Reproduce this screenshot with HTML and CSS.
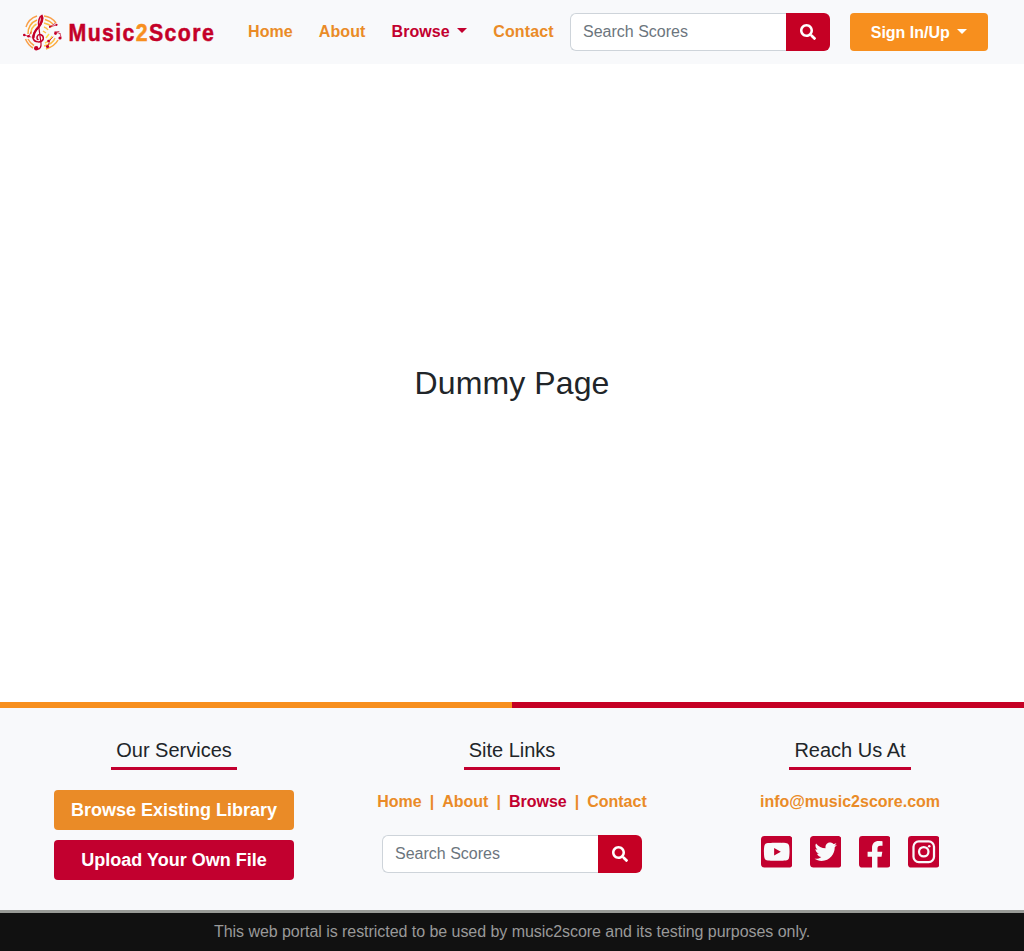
FILE: index.html
```html
<!DOCTYPE html>
<html lang="en">
<head>
<meta charset="utf-8">
<title>Music2Score</title>
<link rel="stylesheet" href="styles.css">
</head>
<body>
<svg class="defs" width="0" height="0">
  <symbol id="search" viewBox="0 0 512 512"><path d="M505 442.700L405.300 343c-4.500-4.500-10.600-7-17-7H372c27.600-35.300 44-79.700 44-128C416 93.100 322.900 0 208 0S0 93.100 0 208s93.100 208 208 208c48.300 0 92.700-16.400 128-44v16.300c0 6.400 2.500 12.500 7 17l99.700 99.700c9.400 9.400 24.600 9.400 33.900 0l28.300-28.300c9.400-9.400 9.400-24.600.1-34zM208 336c-70.700 0-128-57.200-128-128 0-70.700 57.200-128 128-128 70.700 0 128 57.200 128 128 0 70.700-57.200 128-128 128z"/></symbol>
</svg>
<header class="navbar">
  <a class="brand" aria-label="Music2Score">
    <svg width="200" height="44" viewBox="18 10 200 44">
      <g fill="none" stroke-width="1.500">
        <g stroke="#f9a04a">
          <path d="M26 27A17 17 0 0 1 37 16M44 16A17 17 0 0 1 56 23"/>
          <path d="M25.500 39Q28 45 33 48"/>
          <path d="M28 34A14 14 0 0 1 37 20M45 19.500Q50 21 53 24" stroke="#fba93c"/>
          <path d="M28 39Q30 43 34 45.500"/>
          <path d="M46 49Q55 46 58 40" stroke="#fba93c"/>
        </g>
        <g stroke="#fdbf45">
          <path d="M31 34A11 11 0 0 1 36.500 24M44 23Q49 24 52 27"/>
          <path d="M44 27Q47 28 48 30M43 31L46 33"/>
          <path d="M44 46Q53 44 55 38"/>
          <path d="M45 43Q50 41 52 36M46 38L49 34" stroke="#ffd84a"/>
        </g>
      </g>
      <g fill="none" stroke="#c40028" stroke-linecap="round">
        <path d="M39 27.500C37.500 21 39.500 16.500 42 15.500C43.500 18 42.500 23.500 38.500 27.500C34.500 31.500 32.500 34 33 38C34 43 42 43 43.300 39C43.800 34.500 38.500 33 37.200 36.500C36.700 38.500 37.300 39.500 38 39.500" stroke-width="1.500"/>
        <path d="M42 18Q42 23 38 27.500Q33.700 32 33.500 37.500" stroke-width="2.300"/>
        <path d="M38.500 25L41 43C41.500 47 40 49.300 37 49.300" stroke-width="1.200"/>
        <path d="M49.500 27L55 23.500M49.500 27L56.500 25M55 32L60 33.500M55 32L59 31.500M60 33.500L61 37M24 35L31 37M31 32L29 36M48 46L50 40M50 40L53 37" stroke-width=".7"/>
      </g>
      <g fill="#c40028">
        <circle cx="36.200" cy="48.300" r="2.200"/><circle cx="24.300" cy="35" r="1.300"/><circle cx="28.500" cy="36.300" r="1.300"/>
        <circle cx="50" cy="26.800" r="1"/><circle cx="55.500" cy="33.500" r="1.400"/><circle cx="60" cy="38" r="1.600"/>
        <circle cx="48.500" cy="41" r="1.300"/><circle cx="47.500" cy="46.500" r="1.600"/><circle cx="56.500" cy="24.800" r="1.100"/>
      </g>
      <text class="wordmark" transform="translate(68.500 41.300) scale(.87 1)" textLength="167">Music<tspan class="two">2</tspan>Score</text>
    </svg>
  </a>
  <nav class="menu">
    <a>Home</a><a>About</a><a class="active">Browse <i class="caret"></i></a><a>Contact</a>
  </nav>
  <form class="search"><input type="text" placeholder="Search Scores"><button type="button" aria-label="Search"><svg width="16" height="16"><use href="#search"/></svg></button></form>
  <button class="signin" type="button">Sign In/Up <i class="caret"></i></button>
</header>
<main><h1>Dummy Page</h1></main>
<div class="stripe"></div>
<footer>
  <section>
    <h2>Our Services</h2>
    <a class="service">Browse Existing Library</a>
    <a class="service upload">Upload Your Own File</a>
  </section>
  <section>
    <h2>Site Links</h2>
    <nav class="links"><a>Home</a><span>|</span><a>About</a><span>|</span><a class="active">Browse</a><span>|</span><a>Contact</a></nav>
    <form class="search"><input type="text" placeholder="Search Scores"><button type="button" aria-label="Search"><svg width="16" height="16"><use href="#search"/></svg></button></form>
  </section>
  <section>
    <h2>Reach Us At</h2>
    <a class="links">info@music2score.com</a>
    <div class="social">
      <svg viewBox="0 32 448 448"><path d="M186.800 202.100l95.200 54.100-95.200 54.100V202.100zM448 80v352c0 26.500-21.500 48-48 48H48c-26.500 0-48-21.500-48-48V80c0-26.500 21.500-48 48-48h352c26.500 0 48 21.500 48 48zm-42 176.300s0-59.600-7.600-88.200c-4.200-15.800-16.500-28.200-32.200-32.400C337.900 128 224 128 224 128s-113.900 0-142.200 7.700c-15.700 4.200-28 16.600-32.200 32.400-7.600 28.500-7.600 88.200-7.600 88.200s0 59.600 7.600 88.200c4.200 15.800 16.500 27.700 32.200 31.900C110.100 384 224 384 224 384s113.900 0 142.200-7.700c15.700-4.200 28-16.100 32.200-31.900 7.600-28.500 7.600-88.100 7.600-88.100z"/></svg>
      <svg viewBox="0 32 448 448"><path d="M400 32H48C21.500 32 0 53.500 0 80v352c0 26.500 21.500 48 48 48h352c26.500 0 48-21.500 48-48V80c0-26.500-21.500-48-48-48zm-48.900 158.800c.2 2.800.2 5.700.2 8.500 0 86.700-66 186.600-186.600 186.600-37.200 0-71.700-10.800-100.700-29.400 5.300.6 10.400.8 15.800.8 30.700 0 58.900-10.400 81.400-28-28.800-.6-53-19.500-61.300-45.500 10.100 1.500 19.200 1.500 29.600-1.200-30-6.100-52.500-32.500-52.500-64.400v-.8c8.700 4.900 18.900 7.900 29.600 8.300a65.447 65.447 0 0 1-29.200-54.600c0-12.200 3.200-23.400 8.900-33.100 32.300 39.800 80.800 65.800 135.200 68.600-9.300-44.500 24-80.600 64-80.600 18.900 0 35.900 7.900 47.900 20.700 14.800-2.800 29-8.300 41.600-15.800-4.900 15.200-15.200 28-28.800 36.100 13.200-1.400 26-5.100 37.800-10.200-8.900 13.100-20.100 24.700-32.900 34z"/></svg>
      <svg viewBox="0 32 448 448"><path d="M400 32H48A48 48 0 0 0 0 80v352a48 48 0 0 0 48 48h137.250V327.690h-63V256h63v-54.640c0-62.150 37-96.480 93.670-96.480 27.140 0 55.520 4.840 55.520 4.840v61h-31.270c-30.810 0-40.420 19.120-40.420 38.730V256h68.780l-11 71.690h-57.780V480H400a48 48 0 0 0 48-48V80a48 48 0 0 0-48-48z"/></svg>
      <svg viewBox="0 32 448 448"><rect y="32" width="448" height="448" rx="48"/><g class="camera"><rect x="78" y="110" width="292" height="292" rx="76"/><circle cx="224" cy="256" r="67"/></g><circle class="lens" cx="302" cy="178" r="18"/></svg>
    </div>
  </section>
</footer>
<div class="notice">This web portal is restricted to be used by music2score and its testing purposes only.</div>
</body>
</html>
```
FILE: styles.css
```css
* { box-sizing: border-box; }
body { margin: 0; height: 951px; display: flex; flex-direction: column; font: 16px/24px "Liberation Sans", Arial, sans-serif; color: #212529; background: #fff; }
.defs { position: absolute; }
.navbar { height: 64px; background: #f8f9fb; display: flex; align-items: center; padding-left: 18px; }
.brand { width: 230px; height: 44px; }
.brand svg { display: block; }
.wordmark { font: bold 24.500px "Liberation Sans", Arial, sans-serif; fill: #c40028; stroke: #c40028; stroke-width: .5px; }
.two { fill: #f78f1e; stroke: #f78f1e; }
.menu { display: flex; gap: 26px; width: 322px; font-weight: bold; letter-spacing: .09px; color: #ea8b27; white-space: nowrap; }
.active { color: #c2002f; }
.caret { display: inline-block; margin-left: 3px; vertical-align: 4px; border: 5px solid transparent; border-top-color: currentColor; border-bottom: 0; }
.search { display: flex; width: 260px; height: 38px; margin: 0; }
.search input { width: 217px; height: 38px; margin: 0; padding: 6px 12px; border: 1px solid #ced4da; border-right: 0; border-radius: 6px 0 0 6px; font: inherit; background: #fff; }
.search input::placeholder { color: #6c757d; opacity: 1; }
.search button { width: 44px; margin-left: -1px; padding: 0; border: 0; border-radius: 0 6px 6px 0; background: #c50024; display: flex; align-items: center; justify-content: center; }
.search svg { fill: #fff; }
.signin { width: 138px; height: 38px; margin-left: 20px; padding: 2px 0 0; border: 0; border-radius: 4px; background: #f78f1e; color: #fff; font: bold 16px/24px "Liberation Sans", Arial, sans-serif; }
main { flex: 1; display: flex; align-items: center; justify-content: center; }
h1 { margin: 0; font-size: 32px; line-height: 38px; font-weight: 400; letter-spacing: .1px; }
.stripe { height: 6px; background: linear-gradient(90deg, #f78f1e 50%, #c50024 50%); }
footer { height: 202px; padding: 29px 5px 0; background: #f8f9fb; display: flex; }
section { width: 338px; display: flex; flex-direction: column; align-items: center; }
h2 { margin: 0 0 20px; padding: 1px 5px 5px; border-bottom: 3px solid #c2002f; font-size: 20px; line-height: 24px; font-weight: 400; }
.service { width: 240px; height: 40px; margin-bottom: 10px; border-radius: 4px; background: #ea8b27; color: #fff; font-size: 18px; line-height: 40px; font-weight: bold; text-align: center; }
.upload { background: #c2002f; }
.links { display: flex; gap: 8px; height: 24px; margin-bottom: 21px; font-weight: bold; color: #ea8b27; }
.links .active { color: #c2002f; }
.social { display: flex; gap: 17.500px; margin-top: 1px; }
.social svg { width: 31.500px; height: 31.500px; fill: #c2002f; }
.camera { fill: none; stroke: #f8f9fb; stroke-width: 32; }
.social .lens { fill: #f8f9fb; }
.notice { height: 41px; padding-top: 7px; border-top: 3px solid #999b97; background: #111; color: #999; text-align: center; letter-spacing: -.045px; }
```
